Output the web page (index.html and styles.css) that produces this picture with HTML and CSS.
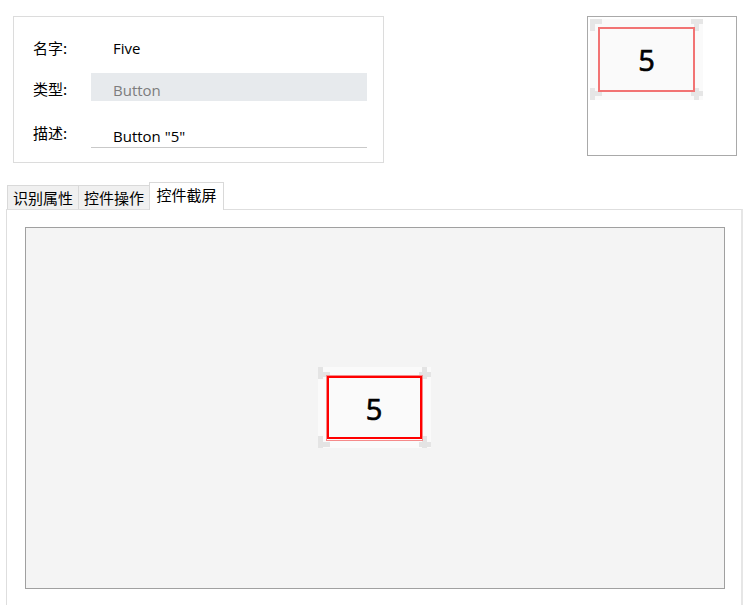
FILE: index.html
```html
<!DOCTYPE html>
<html>
<head>
<meta charset="utf-8">
<link rel="stylesheet" href="styles.css">
</head>
<body>
<div class="top">
  <div class="form">
    <div class="row">
      <div class="label">名字:</div>
      <div class="value">Five</div>
    </div>
    <div class="row second">
      <div class="label">类型:</div>
      <div class="value readonly">Button</div>
    </div>
    <div class="row last">
      <div class="label">描述:</div>
      <div class="value underline">Button "5"</div>
    </div>
  </div>
  <div class="preview">
    <svg class="shot" width="113" height="81" viewBox="0 0 113 81">
      <rect x="0" y="0" width="113" height="81" fill="#fafafa"/>
      <g fill="#e6e6e6">
        <rect x="0" y="0" width="5" height="12"/><rect x="0" y="0" width="12" height="5"/>
        <rect x="104" y="0" width="5" height="12"/><rect x="101" y="0" width="12" height="5"/>
        <rect x="0" y="69" width="5" height="12"/><rect x="0" y="72" width="12" height="5"/>
        <rect x="104" y="69" width="5" height="12"/><rect x="101" y="72" width="12" height="5"/>
      </g>
      <rect x="9" y="9" width="95" height="63" fill="#fafafa" stroke="#f27474" stroke-width="2"/>
      <text x="56.5" y="52" text-anchor="middle" class="digit">5</text>
    </svg>
  </div>
</div>
<div class="tabs">
  <div class="tab">识别属性</div>
  <div class="tab">控件操作</div>
  <div class="tab active">控件截屏</div>
</div>
<div class="panel">
  <div class="canvas">
    <svg class="shot" width="113" height="81" viewBox="0 0 113 81">
      <rect x="0" y="0" width="113" height="81" fill="#fafafa"/>
      <g fill="#e4e4e4">
        <rect x="0" y="0" width="5" height="12"/><rect x="0" y="5" width="12" height="5"/>
        <rect x="104" y="0" width="5" height="12"/><rect x="101" y="5" width="12" height="5"/>
        <rect x="0" y="69" width="5" height="12"/><rect x="0" y="75" width="12" height="5"/>
        <rect x="104" y="69" width="5" height="12"/><rect x="101" y="75" width="12" height="5"/>
      </g>
      <rect x="8.5" y="8.5" width="96" height="65" fill="none" stroke="#f58a8a" stroke-width="1"/>
      <rect x="10" y="10" width="93" height="61" fill="#fafafa" stroke="#ff0000" stroke-width="2"/>
      <text x="56" y="52.5" text-anchor="middle" class="digit">5</text>
    </svg>
  </div>
</div>
</body>
</html>
```

FILE: styles.css
```css
html, body {
  margin: 0;
  padding: 0;
  background: #ffffff;
}
body {
  width: 747px;
  height: 605px;
  overflow: hidden;
  font-family: "Open Sans", "Noto Sans CJK SC", sans-serif;
  font-size: 15px;
  color: #000000;
}
.top {
  display: flex;
  align-items: flex-start;
  padding: 16px 0 0 13px;
}
.form {
  box-sizing: border-box;
  width: 371px;
  height: 147px;
  border: 1px solid #dcdcdc;
  padding: 17px 16px 0 19px;
  display: flex;
  flex-direction: column;
  gap: 11px;
}
.row {
  display: flex;
  align-items: center;
  height: 28px;
}
.row.second .label {
  padding-top: 4px;
}
.row.last {
  height: 36px;
  align-items: flex-end;
}
.label {
  width: 58px;
  flex: none;
  font-family: "Noto Sans CJK SC", sans-serif;
  font-size: 15px;
  line-height: 20px;
}
.row.last .label {
  padding-bottom: 5px;
}
.value {
  flex: 1;
  height: 28px;
  line-height: 28px;
  padding-left: 22px;
  box-sizing: border-box;
}
.value.readonly {
  background: #e7eaed;
  color: #7d7d7d;
  line-height: 34px;
}
.value.underline {
  border-bottom: 1px solid #c9c9c9;
  height: 36px;
  padding-top: 12px;
  line-height: 24px;
}
.preview {
  box-sizing: border-box;
  width: 150px;
  height: 140px;
  margin-left: 203px;
  border: 1px solid #a9a9a9;
  padding: 2px 0 0 2px;
}
.shot {
  display: block;
}
.digit {
  font-family: "Open Sans", sans-serif;
  font-weight: 400;
  font-size: 29px;
  fill: #000000;
  stroke: #000000;
  stroke-width: 0.7px;
}
.tabs {
  display: flex;
  align-items: flex-end;
  height: 27px;
  margin-top: 19px;
  padding-left: 7px;
}
.tab {
  box-sizing: border-box;
  width: 71px;
  height: 24px;
  border: 1px solid #d9d9d9;
  border-bottom: none;
  border-right: none;
  background: #f0f0f0;
  font-family: "Noto Sans CJK SC", sans-serif;
  font-size: 15px;
  line-height: 23px;
  text-align: center;
}
.tab.active {
  position: relative;
  z-index: 1;
  width: 75px;
  height: 28px;
  margin-bottom: -1px;
  background: #ffffff;
  border-right: 1px solid #d9d9d9;
  line-height: 24px;
}
.panel {
  box-sizing: border-box;
  width: 737px;
  height: 400px;
  margin-left: 6px;
  border: 1px solid #dedede;
  border-right: 2px solid #e6e6e6;
  padding: 17px 0 0 18px;
}
.canvas {
  box-sizing: border-box;
  width: 700px;
  height: 362px;
  border: 1px solid #a0a0a0;
  background: #f4f4f4;
  display: flex;
  align-items: center;
  justify-content: center;
  padding: 0 1px 1px 0;
}
```
